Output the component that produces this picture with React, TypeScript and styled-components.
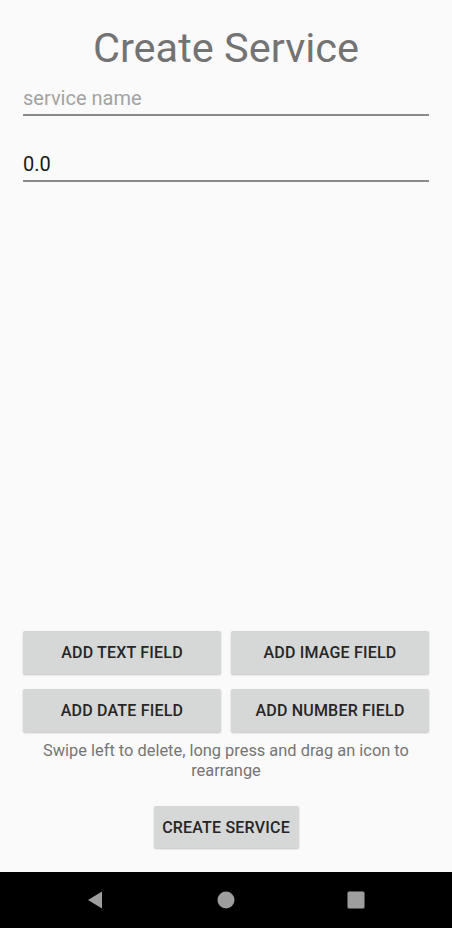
import React from 'react';
import styled, { createGlobalStyle } from 'styled-components';

const GlobalStyle = createGlobalStyle`
  html, body {
    margin: 0;
    padding: 0;
    background: #fafafa;
  }
  body {
    font-family: Roboto, "Noto Sans", sans-serif;
  }
`;

const Screen = styled.div`
  width: 452px;
  height: 928px;
  display: flex;
  flex-direction: column;
  background: #fafafa;
  overflow: hidden;
`;

const Content = styled.main`
  flex: 1;
  display: flex;
  flex-direction: column;
  padding: 0 23px;
`;

const Title = styled.h1`
  margin: 22px 0 0;
  font-size: 41.5px;
  font-weight: 400;
  color: #737373;
  text-align: center;
  line-height: 52px;
`;

const Field = styled.div<{ $top: number }>`
  margin-top: ${(p) => p.$top}px;
  border-bottom: 2px solid #8a8a8a;
  padding-bottom: 2px;
`;

const FieldText = styled.div<{ $placeholder?: boolean }>`
  font-size: 20px;
  line-height: 28px;
  color: ${(p) => (p.$placeholder ? '#a3a3a3' : '#1a1a1a')};
`;

const Spacer = styled.div`
  flex: 1;
`;

const ButtonGrid = styled.div`
  display: grid;
  grid-template-columns: 1fr 1fr;
  column-gap: 10px;
  row-gap: 15px;
  margin-bottom: 1px;
`;

const FlatButton = styled.button`
  height: 43px;
  border: none;
  border-radius: 2px;
  background: #d6d7d7;
  box-shadow: 0 1px 2px rgba(0, 0, 0, 0.22);
  font-family: Roboto, "Noto Sans", sans-serif;
  font-size: 16px;
  font-weight: 500;
  color: #262626;
  letter-spacing: 0.2px;
  text-transform: uppercase;
  padding: 0 12px;
`;

const Hint = styled.p`
  margin: 8px 0 0;
  font-size: 16.4px;
  line-height: 20px;
  color: #757575;
  text-align: center;
`;

const SubmitRow = styled.div`
  display: flex;
  justify-content: center;
  margin: 25px 0 24px;
`;

const SubmitButton = styled(FlatButton)`
  width: 145px;
  height: 42px;
  padding: 0;
`;

const NavBar = styled.nav`
  height: 56px;
  background: #000;
  display: flex;
  align-items: center;
  justify-content: center;
  gap: 110px;
`;

const NavIcon = styled.svg`
  width: 20px;
  height: 20px;
  fill: #9e9e9e;
`;

export default function App() {
  return (
    <>
      <GlobalStyle />
      <Screen>
        <Content>
          <Title>Create Service</Title>
          <Field $top={10}>
            <FieldText $placeholder>service name</FieldText>
          </Field>
          <Field $top={34}>
            <FieldText>0.0</FieldText>
          </Field>
          <Spacer />
          <ButtonGrid>
            <FlatButton>Add Text Field</FlatButton>
            <FlatButton>Add Image Field</FlatButton>
            <FlatButton>Add Date Field</FlatButton>
            <FlatButton>Add Number Field</FlatButton>
          </ButtonGrid>
          <Hint>Swipe left to delete, long press and drag an icon to rearrange</Hint>
          <SubmitRow>
            <SubmitButton>Create Service</SubmitButton>
          </SubmitRow>
        </Content>
        <NavBar>
          <NavIcon viewBox="0 0 20 20">
            <path d="M16 1.5 L16 18.5 L2 10 Z" />
          </NavIcon>
          <NavIcon viewBox="0 0 20 20">
            <circle cx="10" cy="10" r="8.5" />
          </NavIcon>
          <NavIcon viewBox="0 0 20 20">
            <rect x="1.5" y="1.5" width="17" height="17" rx="1.5" />
          </NavIcon>
        </NavBar>
      </Screen>
    </>
  );
}
